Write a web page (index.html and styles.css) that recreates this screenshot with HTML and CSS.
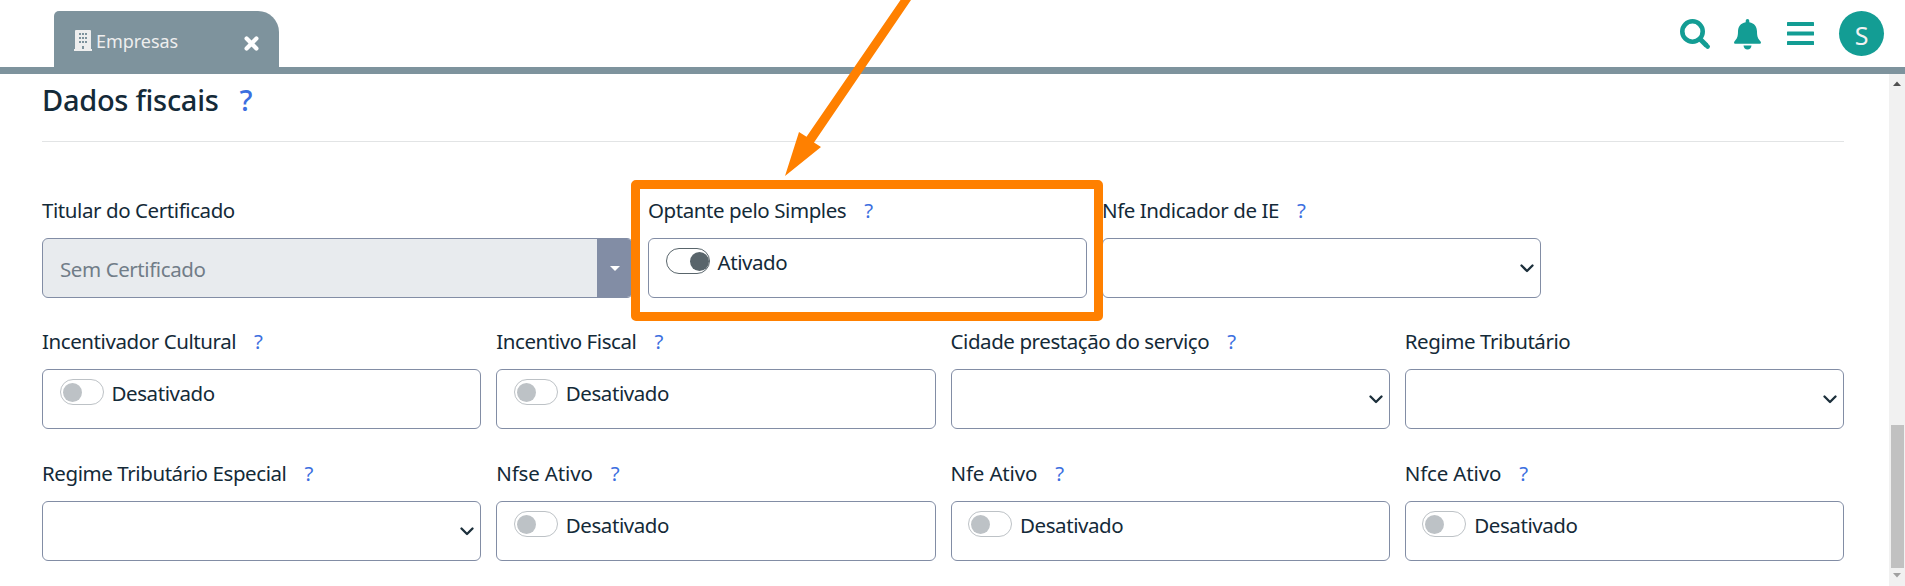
FILE: index.html
```
<!DOCTYPE html>
<html lang="pt-BR">
<head>
<meta charset="utf-8">
<title>Empresas</title>
<link rel="stylesheet" href="styles.css">
</head>
<body>
<header class="topbar">
  <div class="tab">
    <svg class="tab-icon" width="18" height="21" viewBox="0 0 18 21"><path fill="#eee" fill-rule="evenodd" d="M1 1q0-1 1-1h14q1 0 1 1v18h1v2H0v-2h1zM5 3v2h2V3zM8 3v2h2V3zM11 3v2h2V3zM5 7v2h2V7zM8 7v2h2V7zM11 7v2h2V7zM5 11v2h2v-2zM8 11v2h2v-2zM11 11v2h2v-2zM8 16v3h2v-3z"/></svg>
    <span class="tab-name">Empresas</span>
    <svg class="tab-close" width="15" height="15" viewBox="0 0 15 15"><path d="M2.6 2.6l9.8 9.8M12.4 2.6l-9.8 9.8" stroke="#fff" stroke-width="4.2" stroke-linecap="round"/></svg>
  </div>
  <nav class="actions">
    <svg class="search" width="31" height="31" viewBox="0 0 31 31" fill="none" stroke="#139d94"><circle cx="12.5" cy="12.5" r="10.2" stroke-width="4.6"/><path d="M19.5 19.5l7 7" stroke-width="5"/><path d="M26.500 26.500l1.200 1.200" stroke-width="4.500" stroke-linecap="round"/></svg>
    <svg class="bell" width="27" height="31" viewBox="0 0 27 31" fill="#139d94"><path d="M13.500 0Q15.300 0 15.300 1.800V3.200C20.500 4 23 8 23 12.500C23 17.500 24 19.800 26.400 22.200C27.500 23.400 26.900 24.700 25.500 24.700H1.500C.1 24.700-.5 23.400.6 22.200C3 19.800 4 17.500 4 12.500C4 8 6.500 4 11.700 3.200V1.800Q11.700 0 13.500 0Z"/><path d="M9.500 26.500h8q-.5 4-4 4t-4-4z"/></svg>
    <svg class="bars" width="27" height="23" viewBox="0 0 27 23" fill="#139d94"><rect width="27" height="4" rx=".6"/><rect y="9.500" width="27" height="4" rx=".6"/><rect y="19" width="27" height="4" rx=".6"/></svg>
    <span class="avatar">S</span>
  </nav>
</header>
<div class="body">
  <main class="content">
    <h2 class="title"><span class="title-text">Dados fiscais</span><span class="help">?</span></h2>
    <div class="row row-first">
      <div class="field">
        <div class="label"><span>Titular do Certificado</span></div>
        <div class="box certificate"><span class="cert-value">Sem Certificado</span><span class="cert-button"><svg width="10" height="5" viewBox="0 0 10 5"><path d="M0 0h10L5 5z" fill="#fff"/></svg></span></div>
      </div>
      <div class="field">
        <div class="label"><span>Optante pelo Simples</span><span class="help">?</span></div>
        <div class="box"><span class="switch on"></span><span class="state">Ativado</span></div>
        <div class="highlight"></div>
      </div>
      <div class="field">
        <div class="label"><span>Nfe Indicador de IE</span><span class="help">?</span></div>
        <div class="box select"><svg class="chevron" width="14" height="9" viewBox="0 0 14 9"><path d="M1.500 1.500L7 7l5.500-5.500"/></svg></div>
      </div>
    </div>
    <div class="row">
      <div class="field">
        <div class="label"><span>Incentivador Cultural</span><span class="help">?</span></div>
        <div class="box"><span class="switch"></span><span class="state">Desativado</span></div>
      </div>
      <div class="field">
        <div class="label"><span>Incentivo Fiscal</span><span class="help">?</span></div>
        <div class="box"><span class="switch"></span><span class="state">Desativado</span></div>
      </div>
      <div class="field">
        <div class="label"><span>Cidade prestação do serviço</span><span class="help">?</span></div>
        <div class="box select"><svg class="chevron" width="14" height="9" viewBox="0 0 14 9"><path d="M1.500 1.500L7 7l5.500-5.500"/></svg></div>
      </div>
      <div class="field">
        <div class="label"><span>Regime Tributário</span></div>
        <div class="box select"><svg class="chevron" width="14" height="9" viewBox="0 0 14 9"><path d="M1.500 1.500L7 7l5.500-5.500"/></svg></div>
      </div>
    </div>
    <div class="row">
      <div class="field">
        <div class="label"><span>Regime Tributário Especial</span><span class="help">?</span></div>
        <div class="box select"><svg class="chevron" width="14" height="9" viewBox="0 0 14 9"><path d="M1.500 1.500L7 7l5.500-5.500"/></svg></div>
      </div>
      <div class="field">
        <div class="label short"><span>Nfse Ativo</span><span class="help">?</span></div>
        <div class="box"><span class="switch"></span><span class="state">Desativado</span></div>
      </div>
      <div class="field">
        <div class="label short"><span>Nfe Ativo</span><span class="help">?</span></div>
        <div class="box"><span class="switch"></span><span class="state">Desativado</span></div>
      </div>
      <div class="field">
        <div class="label short"><span>Nfce Ativo</span><span class="help">?</span></div>
        <div class="box"><span class="switch"></span><span class="state">Desativado</span></div>
      </div>
    </div>
  </main>
  <aside class="scrollbar">
    <svg width="8" height="5" viewBox="0 0 8 5"><path d="M0 5L4 .5 8 5z" fill="#505050"/></svg>
    <div class="thumb"></div>
    <svg width="8" height="5" viewBox="0 0 8 5"><path d="M0 0h8L4 4.500z" fill="#a0a0a0"/></svg>
  </aside>
</div>
<svg class="arrow" width="320" height="180" viewBox="600 0 320 180"><path d="M900.500 0H911L814 142.500l7 4.500-36 29 14-44 7.500 4.800z" fill="#ff8000"/></svg>
</body>
</html>
```
FILE: styles.css
```
* { box-sizing: border-box; }
body {
  margin: 0;
  height: 586px;
  overflow: hidden;
  display: flex;
  flex-direction: column;
  background: #fff;
  color: #142a38;
  font: 20.5px/30px "Noto Sans", "Open Sans", sans-serif;
  letter-spacing: -0.42px;
}
svg { display: block; flex: none; }
.topbar {
  flex: none;
  height: 74px;
  border-bottom: 7px solid #7e939d;
  display: flex;
  justify-content: space-between;
  padding: 11px 21px 0 54px;
}
.tab {
  width: 225px;
  height: 56px;
  display: flex;
  align-items: flex-start;
  padding: 19px 20px 0;
  background: #7e939d;
  border-radius: 5px 21px 0 0;
  color: #eee;
}
.tab-name { font-size: 18px; line-height: 24px; letter-spacing: -0.05px; margin: -1px 0 0 4px; }
.tab-close { margin: 6px 0 0 auto; }
.actions { display: flex; align-items: flex-start; }
.search { margin: 8px 23px 0 0; }
.bell { margin: 8px 26px 0 0; }
.bars { margin: 11px 25px 0 0; }
.avatar {
  width: 45px;
  height: 45px;
  border-radius: 50%;
  background: #139d94;
  color: #f2f2f2;
  font-size: 25px;
  line-height: 48px;
  text-align: center;
}
.body { flex: 1; display: flex; min-height: 0; }
.content { flex: 1; padding: 0 45px 0 42px; }
.title {
  height: 68px;
  margin: 0 0 54px;
  padding-top: 8px;
  border-bottom: 1px solid #e2e4e5;
  font-size: 29px;
  line-height: 36px;
  font-weight: 500;
  display: flex;
  letter-spacing: -0.28px;
}
.title .help { margin-left: 21px; }
.help { color: #3c6fe0; margin-left: 18px; }
.row {
  display: grid;
  grid-template-columns: repeat(4, 1fr);
  column-gap: 15px;
  margin-bottom: 30px;
}
.row-first { grid-template-columns: 591px 439px 439px; margin-bottom: 29px; }
.field { position: relative; }
.label { display: flex; height: 42px; line-height: 29px; }
.short { letter-spacing: -0.15px; }
.box {
  height: 60px;
  display: flex;
  align-items: flex-start;
  border: 1px solid #828da5;
  border-radius: 6px;
  padding: 9px 16.5px;
}
.switch {
  width: 44px;
  height: 26px;
  border: 1px solid #bdc2c6;
  border-radius: 13px;
  padding: 3px 2px;
  display: flex;
}
.switch::before {
  content: "";
  width: 19px;
  height: 19px;
  border-radius: 50%;
  background: #bdc2c6;
}
.switch.on { border-color: #59656b; justify-content: flex-end; padding-right: 0; }
.switch.on::before { background: #59656b; }
.state { margin-left: 8px; line-height: 29px; }
.select { justify-content: flex-end; padding: 25px 6px 0; }
.chevron { fill: none; stroke: #1c2f3b; stroke-width: 2.3; stroke-linecap: round; stroke-linejoin: round; }
.certificate { padding: 0; background: #e8ebee; align-items: stretch; overflow: hidden; }
.cert-value { flex: 1; padding-left: 17px; line-height: 61px; color: #717d88; }
.cert-button { width: 35px; background: #828da5; display: flex; align-items: center; justify-content: center; }
.highlight {
  position: absolute;
  left: -17px;
  top: -16px;
  width: 472px;
  height: 141px;
  border: 9px solid #ff8000;
  border-radius: 5px;
  z-index: 2;
}
.scrollbar {
  width: 16px;
  background: #f1f1f1;
  display: flex;
  flex-direction: column;
  align-items: center;
  padding: 7px 0 8px;
}
.thumb { width: 13px; height: 143px; margin: auto 0 5px; background: #c1c1c1; }
.arrow { position: absolute; left: 600px; top: 0; }
```
